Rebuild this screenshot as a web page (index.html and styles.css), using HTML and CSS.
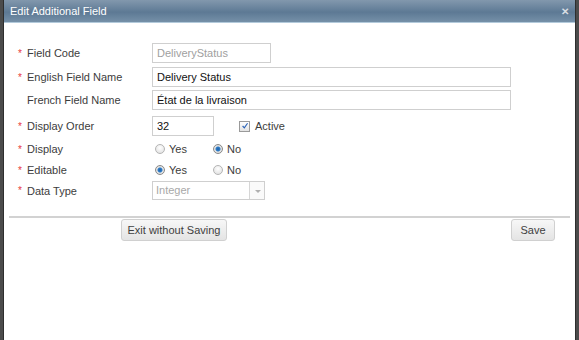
FILE: index.html
```html
<!DOCTYPE html>
<html lang="en">
<head>
<meta charset="UTF-8" />
<title>Edit Additional Field</title>
<link rel="stylesheet" href="styles.css">
</head>
<body>
	<div class="dialog">
		<div class="titlebar">
			<span class="title">Edit Additional Field</span>
			<span class="close">&#x2715;</span>
		</div>
		<div class="form">
			<div class="row row-1">
				<div class="label"><span class="req">*</span>Field Code</div>
				<div class="box box-code disabled">DeliveryStatus</div>
			</div>
			<div class="row row-2">
				<div class="label"><span class="req">*</span>English Field Name</div>
				<div class="box box-wide">Delivery Status</div>
			</div>
			<div class="row row-3">
				<div class="label"><span class="req"></span>French Field Name</div>
				<div class="box box-wide">État de la livraison</div>
			</div>
			<div class="row row-4">
				<div class="label"><span class="req">*</span>Display Order</div>
				<div class="box box-order">32</div>
				<span class="check"><svg width="10" height="10" viewBox="0 0 10 10"><path d="M2 5 L4.2 7.4 L8.2 1.6" fill="none" stroke="#2a62b8" stroke-width="1.4"/></svg></span>
				<span class="opt">Active</span>
			</div>
			<div class="row row-5">
				<div class="label"><span class="req">*</span>Display</div>
				<span class="radio"></span><span class="opt opt-yes">Yes</span>
				<span class="radio on"></span><span class="opt">No</span>
			</div>
			<div class="row row-6">
				<div class="label"><span class="req">*</span>Editable</div>
				<span class="radio on"></span><span class="opt opt-yes">Yes</span>
				<span class="radio"></span><span class="opt">No</span>
			</div>
			<div class="row row-7">
				<div class="label"><span class="req">*</span>Data Type</div>
				<div class="select disabled">
					<span class="select-text">Integer</span>
					<span class="select-arrow"></span>
				</div>
			</div>
		</div>
		<div class="footer">
			<button class="btn btn-exit">Exit without Saving</button>
			<button class="btn btn-save">Save</button>
		</div>
	</div>
</body>
</html>
```

FILE: styles.css
```css
html, body {margin: 0; height: 100%;}
body {background: #4b4b4b; font-family: "Liberation Sans", Arial, sans-serif; font-size: 11px; color: #3c3c3c; overflow: hidden;}

.dialog {margin-left: 3px; width: 571px; height: 340px; background: #fff; border-left: 1px solid #2e2e2e; border-right: 1px solid #2e2e2e;}

.titlebar {height: 22px; display: flex; align-items: center; justify-content: space-between; padding: 0 6px 0 6px; background: linear-gradient(#8298ad, #647f99 45%, #5d7994 55%, #7590a8); border-bottom: 1px solid #b3cadb;}
.title {color: #fff; font-size: 11px; margin-top: -1px;}
.close {color: #d9dee3; font-size: 10px; font-weight: bold;}

.form {padding-top: 20px;}
.row {display: flex; align-items: center;}
.row-1 {height: 20px;}
.row-2 {height: 20px; margin-top: 4px;}
.row-3 {height: 20px; margin-top: 3px;}
.row-4 {height: 20px; margin-top: 6px;}
.row-5 {height: 18px; margin-top: 4px;}
.row-6 {height: 18px; margin-top: 3px;}
.row-7 {height: 19px; margin-top: 2px;}

.label {width: 134px; padding-left: 14px; display: flex; align-items: center;}
.req {display: inline-block; width: 9px; color: #e8383d; font-size: 10px; position: relative; top: 0;}

.box {height: 18px; line-height: 18px; border: 1px solid #cfcfcf; padding: 0 4px; color: #111; font-size: 11px;}
.box.disabled {color: #a0a0a0;}
.box-code {width: 109px;}
.box-wide {width: 349px;}
.box-order {width: 52px;}

.check {width: 9px; height: 9px; border: 1px solid #9a9a9a; background: linear-gradient(#fff, #e3e3e3); margin-left: 25px; display: flex; align-items: center; justify-content: center;}
.check svg {margin-left: 1px;}
.opt {margin-left: 5px; color: #3c3c3c;}
.radio + .opt {margin-left: 4px;}
.opt-yes {width: 34px;}

.radio {width: 8px; height: 8px; border-radius: 50%; border: 1px solid #b4b4b4; background: radial-gradient(circle at 50% 35%, #fff, #dcdcdc); margin-left: 3px;}
.opt-yes + .radio {margin-left: 10px;}
.radio.on {background: radial-gradient(circle, #1f5fa8 0, #2d7dc8 2px, #e6e6e6 3px, #d0d0d0 100%); border-color: #8a8a8a;}

.select {display: flex; width: 111px; height: 17px; border: 1px solid #cfcfcf;}
.select-text {flex: 1; line-height: 17px; padding-left: 3px; color: #a8a8a8;}
.select-arrow {width: 14px; border-left: 1px solid #d6d6d6; background: #fafafa; position: relative;}
.select-arrow::after {content: ""; position: absolute; left: 5px; top: 8px; border-left: 3px solid transparent; border-right: 3px solid transparent; border-top: 3px solid #b0b0b0;}

.footer {margin: 16px 5px 0 5px; border-top: 2px solid #d2d2d2; display: flex; justify-content: space-between; padding: 1px 15px 0 112px;}
.btn {height: 22px; border: 1px solid #d0d0d0; border-radius: 3px; background: linear-gradient(#f7f7f7, #e4e4e4); color: #404040; font-family: "Liberation Sans", Arial, sans-serif; font-size: 11px; padding: 0; white-space: nowrap;}
.btn-exit {width: 106px;}
.btn-save {width: 44px;}
```
